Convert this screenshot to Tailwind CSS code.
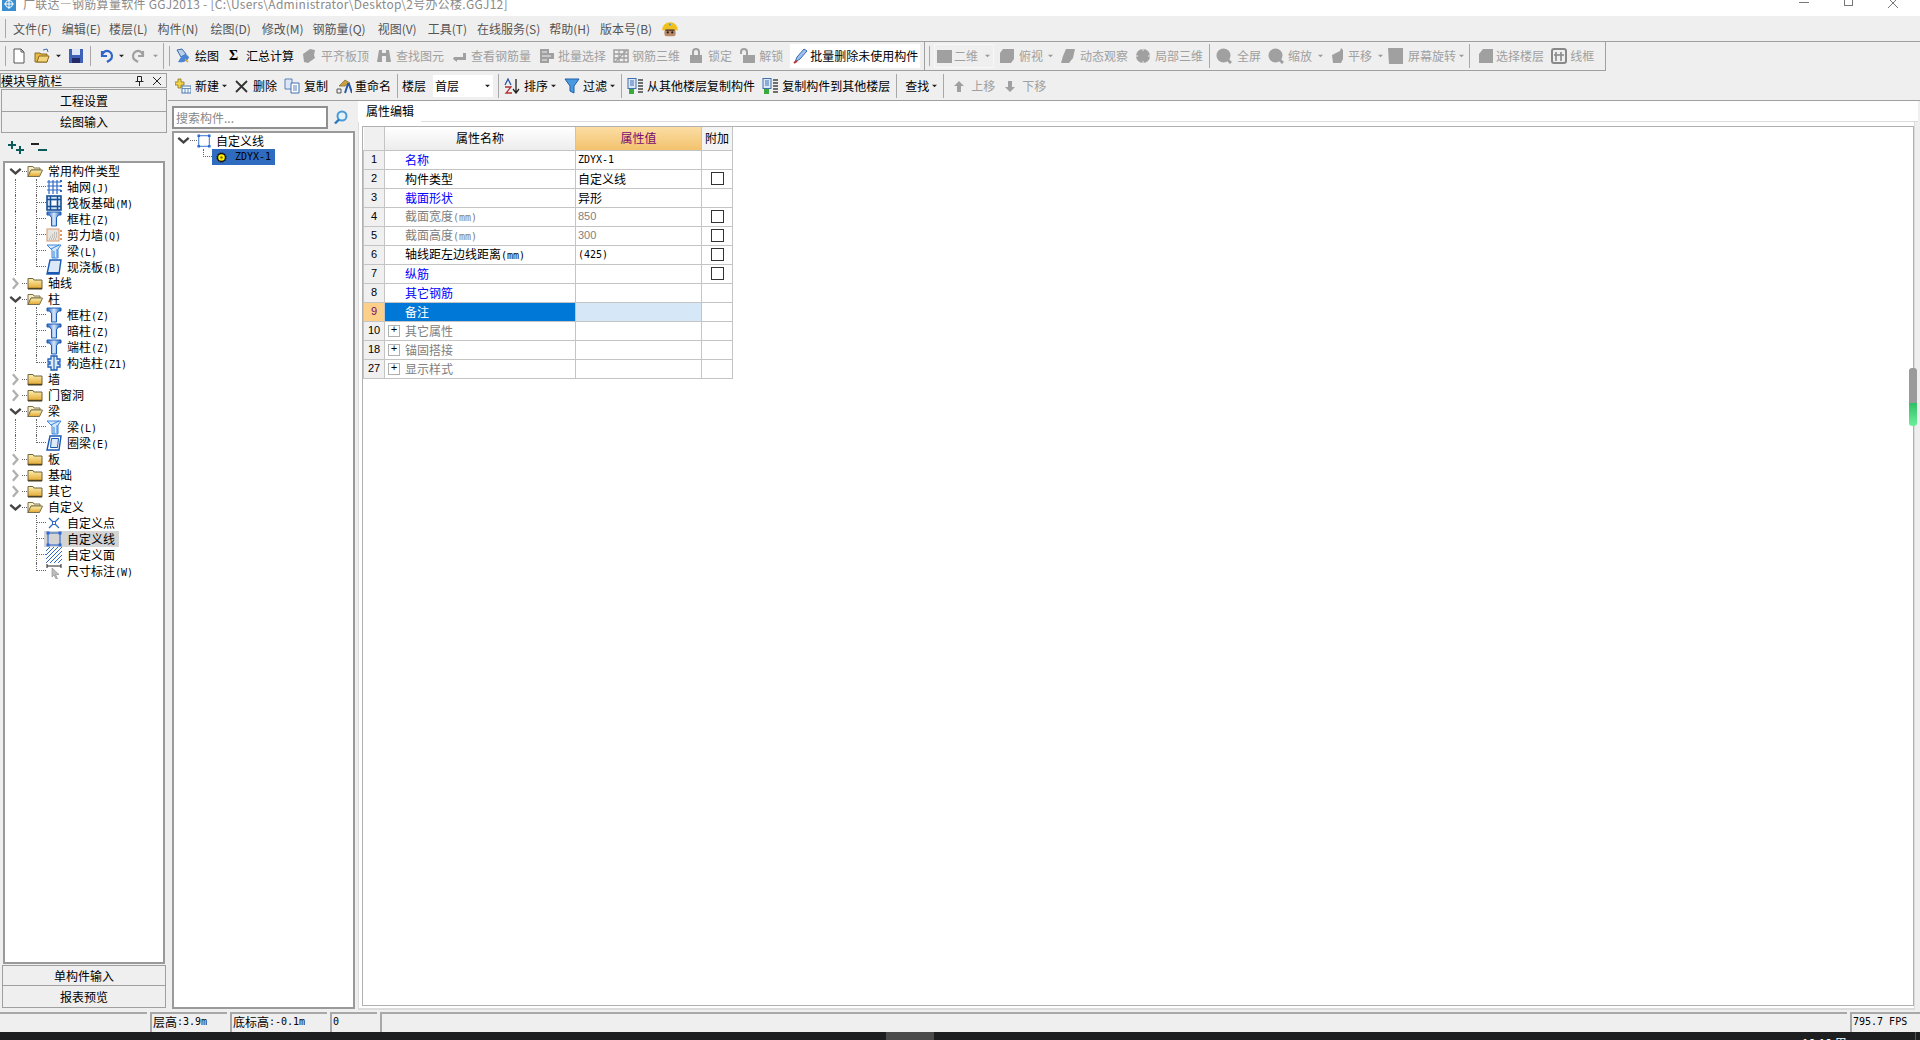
<!DOCTYPE html>
<html lang="zh-CN">
<head>
  <meta charset="UTF-8" />
  <title>广联达—钢筋算量软件 GGJ2013</title>
  <script src="https://cdn.jsdelivr.net/npm/@tailwindcss/browser@4"></script>
</head>
<body class="w-[1920px] h-[1040px] overflow-hidden flex flex-col bg-[#efefef] text-black text-[12px] leading-none font-['Noto_Sans_CJK_SC',sans-serif]">

  <!-- Icon sheet -->
  <svg class="absolute w-0 h-0">
    <defs>
      <linearGradient id="fold" x1="0" y1="0" x2="0" y2="1"><stop offset="0" stop-color="#fdf0b0"/><stop offset="1" stop-color="#e2a52c"/></linearGradient>
      <linearGradient id="colg" x1="0" y1="0" x2="1" y2="0"><stop offset="0" stop-color="#1f5fb8"/><stop offset="0.5" stop-color="#d8e8fb"/><stop offset="1" stop-color="#1f5fb8"/></linearGradient>
    </defs>
    <symbol id="folder" viewBox="0 0 16 16"><path d="M1 3.500h5l1 1.500h8v9H1z" fill="url(#fold)" stroke="#6e6440"/><path d="M1 13.500h14" stroke="#4c4326" stroke-width="1.400"/></symbol>
    <symbol id="folder-open" viewBox="0 0 16 16"><path d="M1 3.500h5l1 1.500h6v2H4l-3 7z" fill="#f8efc4" stroke="#7a6f48"/><path d="M4 7h11.500l-3 6.500H1z" fill="url(#fold)" stroke="#7a6f48"/></symbol>
    <symbol id="down" viewBox="0 0 10 10"><path d="M1 3l4 3.500L9 3" fill="none" stroke="#444" stroke-width="1.800"/></symbol>
    <symbol id="right" viewBox="0 0 10 10"><path d="M3 1l3.500 4L3 9" fill="none" stroke="#b0b0b0" stroke-width="1.800"/></symbol>
    <symbol id="grid" viewBox="0 0 16 16"><path d="M3 1v14M7 1v14M11 1v14M1 3h14M1 7h14M1 11h14" stroke="#2d69c4" stroke-width="1.200" fill="none"/><path d="M14 1h2v2h-2zM14 6h2v2h-2zM14 11h2v2h-2z" fill="#2d69c4"/></symbol>
    <symbol id="raft" viewBox="0 0 16 16"><rect x="1" y="1" width="14" height="14" fill="#cfe0f5" stroke="#164f94" stroke-width="1.600"/><path d="M1 4.500h14M1 11.500h14M4.500 1v14M11.500 1v14" stroke="#164f94" stroke-width="1.400"/><rect x="6" y="6" width="4" height="4" fill="#fff"/></symbol>
    <symbol id="column" viewBox="0 0 16 16"><path d="M1 1h14v3h-3v1l-1.500 1v9h-5V6L4 5V4H1z" fill="url(#colg)" stroke="#1f5fb8"/></symbol>
    <symbol id="wall" viewBox="0 0 16 16"><rect x="1" y="2" width="12" height="12" fill="#e8e4de" stroke="#d49a72"/><path d="M3 12h8M4 10h7M6 8h5M8 6h3" stroke="#9a9a9a" stroke-dasharray="1 1"/><path d="M14 4h2M14 8h2M14 12h2" stroke="#e07020" stroke-width="1.400"/></symbol>
    <symbol id="beam" viewBox="0 0 16 16"><path d="M1 2h14l-3 4v9H6V7z" fill="#d8e9fb" stroke="#3a86dc"/><path d="M5 6l8-4M8 8v7M11 6v8" stroke="#3a86dc"/></symbol>
    <symbol id="slab" viewBox="0 0 16 16"><path d="M4 1h11l-2 14H1z" fill="#dbe9f9" stroke="#1a58b4" stroke-width="1.400"/><path d="M2 14h11" stroke="#1a58b4" stroke-width="2"/></symbol>
    <symbol id="ring" viewBox="0 0 16 16"><path d="M4 1h11l-2 14H1z" fill="#fff" stroke="#1a58b4" stroke-width="1.400"/><path d="M5.500 3.500h7l-1 9h-7z" fill="#dbe9f9" stroke="#1a58b4"/></symbol>
    <symbol id="gz" viewBox="0 0 16 16"><path d="M5 1h6v3h3v3h-2v2h2v3h-3v3H5v-3H2V9h2V7H2V4h3z" fill="#dbe9f9" stroke="#1f5fb8" stroke-width="1.300"/><path d="M8 1v14" stroke="#1f5fb8"/></symbol>
    <symbol id="pt" viewBox="0 0 16 16"><path d="M3 3l10 10M13 3L3 13" stroke="#2d69c4" stroke-width="1.300"/><rect x="6.500" y="6.500" width="3" height="3" fill="#fff" stroke="#2d69c4"/></symbol>
    <symbol id="line" viewBox="0 0 16 16"><rect x="2" y="2" width="12" height="12" fill="none" stroke="#1f5fc8"/><path d="M0.500 0.500h3v3h-3zM12.500 0.500h3v3h-3zM0.500 12.500h3v3h-3zM12.500 12.500h3v3h-3z" fill="#2d69d4"/></symbol>
    <symbol id="face" viewBox="0 0 16 16"><path d="M0 4l4-4M0 8l8-8M0 12L12 0M0 16L16 0M4 16L16 4M8 16l8-8M12 16l4-4" stroke="#2d69c4"/></symbol>
    <symbol id="dim" viewBox="0 0 16 16"><path d="M1 1v4M15 1v4M1 3h14" stroke="#222"/><path d="M6 5l7 6.500H9.500l2 4-1.500.500-2-4L6 14z" fill="#bdbdbd" stroke="#888" stroke-width="0.600"/></symbol>
    <symbol id="gear" viewBox="0 0 12 12"><circle cx="6" cy="6" r="4.800" fill="#111" stroke="#111" stroke-width="1.400" stroke-dasharray="1.500 1"/><circle cx="6" cy="6" r="3.600" fill="#fff000"/><circle cx="6" cy="6" r="1.300" fill="#7a6a00"/></symbol>
    <symbol id="g-page" viewBox="0 0 16 16"><path d="M2 6l7-5 5 1-1 5 1 3-7 5-4-1z" fill="#a0a0a0"/></symbol>
    <symbol id="g-binoc" viewBox="0 0 16 16"><path d="M3 2h3v3h4V2h3l2 12h-5V8H6v6H1z" fill="#a0a0a0"/></symbol>
    <symbol id="g-back" viewBox="0 0 16 16"><path d="M2 9h9V5h3v7H5v2L1 11l1-2z" fill="#a0a0a0"/></symbol>
    <symbol id="g-select" viewBox="0 0 16 16"><path d="M1 1h9v4h5v6h-5v4H1z" fill="#a0a0a0"/><path d="M3 4h5M3 8h9M3 12h5" stroke="#efefef"/></symbol>
    <symbol id="g-3d" viewBox="0 0 16 16"><path d="M1 2h14v12H1z" fill="none" stroke="#a0a0a0" stroke-width="1.500"/><path d="M1 6h14M1 10h14M6 2v12M11 2v12M2 14L14 2" stroke="#a0a0a0" stroke-width="1.300"/></symbol>
    <symbol id="g-lock" viewBox="0 0 16 16"><path d="M2 7h12v8H2z" fill="#a0a0a0"/><path d="M5 7V4a3 3 0 016 0v3" fill="none" stroke="#a0a0a0" stroke-width="2"/></symbol>
    <symbol id="g-unlock" viewBox="0 0 16 16"><path d="M3 7h12v8H3z" fill="#a0a0a0"/><path d="M1 6V4a3 3 0 016 0v3" fill="none" stroke="#a0a0a0" stroke-width="2"/></symbol>
    <symbol id="g-top" viewBox="0 0 16 16"><path d="M4 1h11v10l-3 4H1V5z" fill="#a0a0a0"/></symbol>
    <symbol id="g-orbit" viewBox="0 0 16 16"><path d="M6 1h9l-2 9-4 5H1l2-7z" fill="#a0a0a0"/></symbol>
    <symbol id="g-local" viewBox="0 0 16 16"><circle cx="8" cy="8" r="7" fill="#a0a0a0"/><path d="M8 0v3M8 13v3M0 8h3M13 8h3" stroke="#efefef"/></symbol>
    <symbol id="g-full" viewBox="0 0 16 16"><circle cx="7.500" cy="7.500" r="7" fill="#a0a0a0"/><path d="M11 11l4 4" stroke="#a0a0a0" stroke-width="3"/></symbol>
    <symbol id="g-pan" viewBox="0 0 16 16"><path d="M3 7l8-4 1-3 2 2v9l-2 4H4z" fill="#a0a0a0"/></symbol>
    <symbol id="g-rot" viewBox="0 0 16 16"><path d="M0 0h15v16H1z" fill="#a0a0a0"/></symbol>
    <symbol id="g-floor" viewBox="0 0 16 16"><path d="M5 1h10v14H1V6z" fill="#a0a0a0"/></symbol>
    <symbol id="g-wire" viewBox="0 0 16 16"><rect x="1" y="1" width="14" height="14" rx="2" fill="none" stroke="#888" stroke-width="2"/><path d="M5 4v9M10 4v9M3 7h10" stroke="#888" stroke-width="1.600"/></symbol>
    <symbol id="caret" viewBox="0 0 6 4"><path d="M0 0.500h6L3 3.500z" fill="#222"/></symbol>
    <symbol id="caret-g" viewBox="0 0 6 4"><path d="M0 0.500h6L3 3.500z" fill="#999"/></symbol>
    <symbol id="add-doc" viewBox="0 0 16 16"><path d="M3 1h3v3h3v3H6v3H3V7H0V4h3z" fill="#f4d44a" stroke="#8a7420" stroke-width="0.800"/><rect x="7" y="8" width="9" height="7" fill="#f4f8fd" stroke="#4a7ab0"/><path d="M7 10.500h9M10 10.500V15M13 10.500V15" stroke="#4a7ab0" stroke-width="0.800"/></symbol>
    <symbol id="copy" viewBox="0 0 16 16"><path d="M1 1h7v10H1z" fill="#dbe7f6" stroke="#5a82b8"/><path d="M7 5h8v10H7z" fill="#fff" stroke="#3f6fb0"/><path d="M9 8h4M9 10h4M9 12h4" stroke="#5a82b8"/></symbol>
    <symbol id="rename" viewBox="0 0 16 16"><path d="M3 8l6-6 5 3-5 3z" fill="#c8a040" stroke="#8a7030" stroke-width="0.800"/><path d="M9 15l3-9h1l3 9" fill="none" stroke="#2858a8" stroke-width="2"/><path d="M1 11h4v4H1z" fill="none" stroke="#555"/></symbol>
    <symbol id="sort" viewBox="0 0 16 16"><path d="M12 1v13M9 11l3 4 3-4" fill="none" stroke="#222" stroke-width="1.300"/><path d="M1 7l3-6 3 6" fill="none" stroke="#2858a8" stroke-width="1.300"/><path d="M1 9h6l-5 6h6" fill="none" stroke="#b03030" stroke-width="1.300"/></symbol>
    <symbol id="filter" viewBox="0 0 16 16"><path d="M1 1h14l-5 7v7l-4-2V8z" fill="#4a9ae0" stroke="#1f5fa8"/></symbol>
    <symbol id="floor-from" viewBox="0 0 16 16"><rect x="1" y="0.500" width="8" height="10" fill="#dbe7f6" stroke="#3f6fb0"/><path d="M3 3h4M3 5h4M3 7h4" stroke="#3f6fb0"/><path d="M2 11h5v5H2z" fill="#3aa83a"/><path d="M11 2h5M11 5h5M11 8h5M11 11h5M11 14h5" stroke="#444" stroke-width="1.300"/></symbol>
  </svg>

  <!-- Title bar -->
  <header class="h-4 shrink-0 bg-white relative overflow-hidden flex text-[#8a8a8a]">
    <svg class="ml-[2px] -mt-[3px] w-[14px] h-[14px]" viewBox="0 0 14 14"><rect width="14" height="14" fill="#3b8fd0"/><path d="M7 2v10M2 7h10" stroke="#fff"/><circle cx="7" cy="7" r="3.500" fill="none" stroke="#fff"/></svg>
    <span class="ml-[7px] -mt-[2px] tracking-[0.27px] whitespace-nowrap">广联达—钢筋算量软件 GGJ2013 - [C:\Users\Administrator\Desktop\2号办公楼.GGJ12]</span>
    <span class="absolute left-[1799px] top-[2px] w-[10px] h-px bg-[#777]"></span>
    <span class="absolute left-[1844px] -top-[3px] w-[9px] h-[9px] border border-[#777]"></span>
    <svg class="absolute left-[1888px] -top-[2px] w-[10px] h-[10px]" viewBox="0 0 10 10"><path d="M0 0l10 10M10 0L0 10" stroke="#777"/></svg>
  </header>

  <!-- Menu bar -->
  <nav class="h-[26px] shrink-0 border-b border-[#a0a0a0] flex items-center text-[#555]">
    <span class="ml-[5px] w-px h-[19px] bg-[#a8a8a8]"></span>
    <span class="ml-[7px]">文件(F)</span>
    <span class="ml-[10px]">编辑(E)</span>
    <span class="ml-[8px]">楼层(L)</span>
    <span class="ml-[10px]">构件(N)</span>
    <span class="ml-[12px]">绘图(D)</span>
    <span class="ml-[11px]">修改(M)</span>
    <span class="ml-[9px]">钢筋量(Q)</span>
    <span class="ml-[12px]">视图(V)</span>
    <span class="ml-[11px]">工具(T)</span>
    <span class="ml-[10px]">在线服务(S)</span>
    <span class="ml-[9px]">帮助(H)</span>
    <span class="ml-[10px]">版本号(B)</span>
    <svg class="ml-[9px] w-[18px] h-[18px]" viewBox="0 0 16 16"><path d="M1 9a7 7 0 0114 0z" fill="#f0c020"/><rect x="3" y="8.500" width="10" height="6" rx="2" fill="#b98a68"/><path d="M4 9h8" stroke="#3a2a20"/><circle cx="6" cy="11" r="1" fill="#222"/><circle cx="10" cy="11" r="1" fill="#222"/><circle cx="8" cy="4" r="1" fill="#4aa0e0"/></svg>
  </nav>

  <!-- Toolbar 1 -->
  <div class="h-[29px] shrink-0 flex">
    <div class="w-[925px] border-r border-b border-[#a0a0a0] flex items-center text-[#a0a0a0]">
      <span class="ml-[5px] w-px h-5 bg-[#a8a8a8]"></span>
      <svg class="ml-[5px] w-4 h-4" viewBox="0 0 16 16"><path d="M3 1h7l3 3v11H3z" fill="#fff" stroke="#555"/><path d="M10 1v3h3" fill="none" stroke="#555"/></svg>
      <svg class="ml-[7px] w-4 h-4" viewBox="0 0 16 16"><path d="M1 5h5l1 1h6v8H1z" fill="#e8b84a" stroke="#8a6a20"/><path d="M3 14l2-6h10l-2 6z" fill="#f4d67c" stroke="#8a6a20"/><path d="M9 2l4-1 1 3" fill="none" stroke="#3a6ab0"/></svg>
      <svg class="ml-[6px] w-[5px] h-[4px]"><use href="#caret"/></svg>
      <svg class="ml-[7px] w-4 h-4" viewBox="0 0 16 16"><rect x="1" y="1" width="14" height="14" fill="#3f62b8"/><rect x="4" y="1" width="8" height="6" fill="#dfe6f5"/><rect x="4" y="10" width="8" height="5" fill="#232a66"/></svg>
      <span class="ml-[6px] w-px h-5 bg-[#a8a8a8]"></span>
      <svg class="ml-[7px] w-4 h-4" viewBox="0 0 16 16"><path d="M4 3v5h5M4 8a5 5 0 118 4l-3 2" fill="none" stroke="#2f66c8" stroke-width="2.200"/></svg>
      <svg class="ml-[5px] w-[5px] h-[4px]"><use href="#caret"/></svg>
      <svg class="ml-[7px] w-4 h-4" viewBox="0 0 16 16"><path d="M12 3v5H7M12 8a5 5 0 10-8 4l3 2" fill="none" stroke="#a0a0a0" stroke-width="2.200"/></svg>
      <svg class="ml-[6px] w-[5px] h-[4px]"><use href="#caret-g"/></svg>
      <span class="ml-[5px] w-px h-[26px] bg-[#a8a8a8]"></span>
      <span class="ml-[5px] w-px h-5 bg-[#a8a8a8]"></span>
      <svg class="ml-[5px] w-4 h-4" viewBox="0 0 16 16"><path d="M2 2l5-1 4 5-5 3z" fill="#b8cfe8" stroke="#3a6ab0"/><path d="M3 14l3-5 5-3 3 3c-1 4-6 6-11 5z" fill="#4a86d8"/><path d="M10 11l3 3" stroke="#d0a030" stroke-width="1.500"/></svg>
      <span class="ml-1 text-black">绘图</span>
      <span class="ml-[10px] w-[9px] text-black font-bold text-[14px] font-['Liberation_Serif',serif]">Σ</span>
      <span class="ml-[8px] text-black">汇总计算</span>
      <svg class="ml-[7px] w-4 h-4"><use href="#g-page"/></svg><span class="ml-1">平齐板顶</span>
      <svg class="ml-[7px] w-4 h-4"><use href="#g-binoc"/></svg><span class="ml-1">查找图元</span>
      <svg class="ml-[8px] w-4 h-4"><use href="#g-back"/></svg><span class="ml-[3px]">查看钢筋量</span>
      <svg class="ml-[8px] w-4 h-4"><use href="#g-select"/></svg><span class="ml-[3px]">批量选择</span>
      <svg class="ml-[7px] w-4 h-4"><use href="#g-3d"/></svg><span class="ml-[3px]">钢筋三维</span>
      <svg class="ml-[8px] w-4 h-4"><use href="#g-lock"/></svg><span class="ml-1">锁定</span>
      <svg class="ml-[8px] w-4 h-4"><use href="#g-unlock"/></svg><span class="ml-[3px]">解锁</span>
      <span class="ml-[7px] h-6 w-[130px] bg-white flex items-center text-black">
        <svg class="ml-[3px] w-4 h-4" viewBox="0 0 16 16"><path d="M2 14l2-5 7-8 3 2-7 8z" fill="#9cc0ec" stroke="#3a6ab0"/><path d="M1 15l3-2" stroke="#c03030" stroke-width="2"/></svg>
        <span class="ml-px">批量删除未使用构件</span>
      </span>
    </div>
    <div class="w-[681px] border-r border-b border-[#a0a0a0] flex items-center text-[#a0a0a0]">
      <span class="ml-[4px] w-px h-5 bg-[#a8a8a8]"></span>
      <span class="ml-[4px] w-[60px] h-[24px] border border-[#f8f8f8] flex items-center">
        <svg class="ml-[2px] w-4 h-[14px]" viewBox="0 0 16 14"><rect width="15" height="13" y="1" fill="#a0a0a0"/></svg>
        <span class="ml-[1px]">二维</span>
        <svg class="ml-[7px] w-[5px] h-[4px]"><use href="#caret-g"/></svg>
      </span>
      <svg class="ml-[5px] w-4 h-4"><use href="#g-top"/></svg><span class="ml-1">俯视</span>
      <svg class="ml-[5px] w-[5px] h-[4px]"><use href="#caret-g"/></svg>
      <svg class="ml-[7px] w-4 h-4"><use href="#g-orbit"/></svg><span class="ml-1">动态观察</span>
      <svg class="ml-[7px] w-4 h-4"><use href="#g-local"/></svg><span class="ml-1">局部三维</span>
      <span class="ml-[6px] w-px h-[24px] bg-[#a8a8a8]"></span>
      <svg class="ml-[6px] w-4 h-4"><use href="#g-full"/></svg><span class="ml-[5px]">全屏</span>
      <svg class="ml-[7px] w-4 h-4"><use href="#g-full"/></svg><span class="ml-1">缩放</span>
      <svg class="ml-[6px] w-[5px] h-[4px]"><use href="#caret-g"/></svg>
      <svg class="ml-[6px] w-4 h-4"><use href="#g-pan"/></svg><span class="ml-[3px]">平移</span>
      <svg class="ml-[6px] w-[5px] h-[4px]"><use href="#caret-g"/></svg>
      <svg class="ml-[5px] w-4 h-4"><use href="#g-rot"/></svg><span class="ml-1">屏幕旋转</span>
      <svg class="ml-[3px] w-[5px] h-[4px]"><use href="#caret-g"/></svg>
      <span class="ml-[5px] w-px h-[24px] bg-[#a8a8a8]"></span>
      <svg class="ml-[8px] w-4 h-4"><use href="#g-floor"/></svg><span class="ml-[2px]">选择楼层</span>
      <svg class="ml-[7px] w-4 h-4"><use href="#g-wire"/></svg><span class="ml-[3px]">线框</span>
    </div>
  </div>

  <!-- Workspace -->
  <div class="h-[941px] shrink-0 flex">

    <!-- Module navigation -->
    <aside class="w-[168px] shrink-0 pt-[2px] flex flex-col">
      <div class="h-[15px] mr-px border border-[#a0a0a0] flex items-center">
        <span class="tracking-[0.3px]">模块导航栏</span>
        <svg class="ml-[72px] w-[9px] h-[10px]" viewBox="0 0 9 10"><path d="M2.500 0.500h4v5h-4zM0.500 5.500h8M4.500 5.500V10" fill="none" stroke="#222"/></svg>
        <svg class="ml-[9px] w-2 h-2" viewBox="0 0 8 8"><path d="M0 0l8 8M8 0L0 8" stroke="#222"/></svg>
      </div>
      <div class="mt-px ml-px mr-px h-[23px] border border-[#a0a0a0] flex items-center justify-center">工程设置</div>
      <div class="ml-px mr-px h-[21px] border-x border-b border-[#a0a0a0] flex items-center justify-center">绘图输入</div>
      <div class="h-[28px] ml-[2px] mr-[2px] flex items-center">
        <svg class="ml-[6px] w-[17px] h-[14px]" viewBox="0 0 17 14"><path d="M4 1v8M0 5h8M12 6v8M8 10h8" stroke="#0c5a5a" stroke-width="2"/></svg>
        <svg class="ml-[6px] w-[17px] h-[14px]" viewBox="0 0 17 14"><path d="M0 4h8" stroke="#222" stroke-width="2"/><path d="M7 10h9" stroke="#0c5a5a" stroke-width="2"/></svg>
      </div>
      <div class="ml-[3px] w-[162px] h-[803px] border-2 border-[#9a9a9a] bg-white overflow-hidden">
        <!-- 常用构件类型 -->
        <div class="flex h-4 items-center"><svg class="ml-[4px] w-[13px] h-[13px]"><use href="#down"/></svg><span class="w-[5px] border-t border-dotted border-[#666]"></span><svg class="w-4 h-4"><use href="#folder-open"/></svg><span class="ml-[5px]">常用构件类型</span></div>
        <div class="flex h-4 items-center"><span class="w-[11px] h-full border-r border-dotted border-[#666]"></span><span class="ml-[20px] w-[10px] h-full flex flex-col border-l border-dotted border-[#666]"><span class="h-1/2 border-b border-dotted border-[#666]"></span></span><svg class="w-4 h-4"><use href="#grid"/></svg><span class="ml-[5px]">轴网<span class="font-['DejaVu_Sans_Mono'] text-[10px]">(J)</span></span></div>
        <div class="flex h-4 items-center"><span class="w-[11px] h-full border-r border-dotted border-[#666]"></span><span class="ml-[20px] w-[10px] h-full flex flex-col border-l border-dotted border-[#666]"><span class="h-1/2 border-b border-dotted border-[#666]"></span></span><svg class="w-4 h-4"><use href="#raft"/></svg><span class="ml-[5px]">筏板基础<span class="font-['DejaVu_Sans_Mono'] text-[10px]">(M)</span></span></div>
        <div class="flex h-4 items-center"><span class="w-[11px] h-full border-r border-dotted border-[#666]"></span><span class="ml-[20px] w-[10px] h-full flex flex-col border-l border-dotted border-[#666]"><span class="h-1/2 border-b border-dotted border-[#666]"></span></span><svg class="w-4 h-4"><use href="#column"/></svg><span class="ml-[5px]">框柱<span class="font-['DejaVu_Sans_Mono'] text-[10px]">(Z)</span></span></div>
        <div class="flex h-4 items-center"><span class="w-[11px] h-full border-r border-dotted border-[#666]"></span><span class="ml-[20px] w-[10px] h-full flex flex-col border-l border-dotted border-[#666]"><span class="h-1/2 border-b border-dotted border-[#666]"></span></span><svg class="w-4 h-4"><use href="#wall"/></svg><span class="ml-[5px]">剪力墙<span class="font-['DejaVu_Sans_Mono'] text-[10px]">(Q)</span></span></div>
        <div class="flex h-4 items-center"><span class="w-[11px] h-full border-r border-dotted border-[#666]"></span><span class="ml-[20px] w-[10px] h-full flex flex-col border-l border-dotted border-[#666]"><span class="h-1/2 border-b border-dotted border-[#666]"></span></span><svg class="w-4 h-4"><use href="#beam"/></svg><span class="ml-[5px]">梁<span class="font-['DejaVu_Sans_Mono'] text-[10px]">(L)</span></span></div>
        <div class="flex h-4 items-center"><span class="w-[11px] h-full border-r border-dotted border-[#666]"></span><span class="ml-[20px] w-[10px] h-1/2 self-start border-l border-b border-dotted border-[#666]"></span><svg class="w-4 h-4"><use href="#slab"/></svg><span class="ml-[5px]">现浇板<span class="font-['DejaVu_Sans_Mono'] text-[10px]">(B)</span></span></div>
        <!-- 轴线 -->
        <div class="flex h-4 items-center"><svg class="ml-[4px] w-[13px] h-[13px]"><use href="#right"/></svg><span class="w-[5px] border-t border-dotted border-[#666]"></span><svg class="w-4 h-4"><use href="#folder"/></svg><span class="ml-[5px]">轴线</span></div>
        <!-- 柱 -->
        <div class="flex h-4 items-center"><svg class="ml-[4px] w-[13px] h-[13px]"><use href="#down"/></svg><span class="w-[5px] border-t border-dotted border-[#666]"></span><svg class="w-4 h-4"><use href="#folder-open"/></svg><span class="ml-[5px]">柱</span></div>
        <div class="flex h-4 items-center"><span class="w-[11px] h-full border-r border-dotted border-[#666]"></span><span class="ml-[20px] w-[10px] h-full flex flex-col border-l border-dotted border-[#666]"><span class="h-1/2 border-b border-dotted border-[#666]"></span></span><svg class="w-4 h-4"><use href="#column"/></svg><span class="ml-[5px]">框柱<span class="font-['DejaVu_Sans_Mono'] text-[10px]">(Z)</span></span></div>
        <div class="flex h-4 items-center"><span class="w-[11px] h-full border-r border-dotted border-[#666]"></span><span class="ml-[20px] w-[10px] h-full flex flex-col border-l border-dotted border-[#666]"><span class="h-1/2 border-b border-dotted border-[#666]"></span></span><svg class="w-4 h-4"><use href="#column"/></svg><span class="ml-[5px]">暗柱<span class="font-['DejaVu_Sans_Mono'] text-[10px]">(Z)</span></span></div>
        <div class="flex h-4 items-center"><span class="w-[11px] h-full border-r border-dotted border-[#666]"></span><span class="ml-[20px] w-[10px] h-full flex flex-col border-l border-dotted border-[#666]"><span class="h-1/2 border-b border-dotted border-[#666]"></span></span><svg class="w-4 h-4"><use href="#column"/></svg><span class="ml-[5px]">端柱<span class="font-['DejaVu_Sans_Mono'] text-[10px]">(Z)</span></span></div>
        <div class="flex h-4 items-center"><span class="w-[11px] h-full border-r border-dotted border-[#666]"></span><span class="ml-[20px] w-[10px] h-1/2 self-start border-l border-b border-dotted border-[#666]"></span><svg class="w-4 h-4"><use href="#gz"/></svg><span class="ml-[5px]">构造柱<span class="font-['DejaVu_Sans_Mono'] text-[10px]">(Z1)</span></span></div>
        <!-- 墙, 门窗洞 -->
        <div class="flex h-4 items-center"><svg class="ml-[4px] w-[13px] h-[13px]"><use href="#right"/></svg><span class="w-[5px] border-t border-dotted border-[#666]"></span><svg class="w-4 h-4"><use href="#folder"/></svg><span class="ml-[5px]">墙</span></div>
        <div class="flex h-4 items-center"><svg class="ml-[4px] w-[13px] h-[13px]"><use href="#right"/></svg><span class="w-[5px] border-t border-dotted border-[#666]"></span><svg class="w-4 h-4"><use href="#folder"/></svg><span class="ml-[5px]">门窗洞</span></div>
        <!-- 梁 -->
        <div class="flex h-4 items-center"><svg class="ml-[4px] w-[13px] h-[13px]"><use href="#down"/></svg><span class="w-[5px] border-t border-dotted border-[#666]"></span><svg class="w-4 h-4"><use href="#folder-open"/></svg><span class="ml-[5px]">梁</span></div>
        <div class="flex h-4 items-center"><span class="w-[11px] h-full border-r border-dotted border-[#666]"></span><span class="ml-[20px] w-[10px] h-full flex flex-col border-l border-dotted border-[#666]"><span class="h-1/2 border-b border-dotted border-[#666]"></span></span><svg class="w-4 h-4"><use href="#beam"/></svg><span class="ml-[5px]">梁<span class="font-['DejaVu_Sans_Mono'] text-[10px]">(L)</span></span></div>
        <div class="flex h-4 items-center"><span class="w-[11px] h-full border-r border-dotted border-[#666]"></span><span class="ml-[20px] w-[10px] h-1/2 self-start border-l border-b border-dotted border-[#666]"></span><svg class="w-4 h-4"><use href="#ring"/></svg><span class="ml-[5px]">圈梁<span class="font-['DejaVu_Sans_Mono'] text-[10px]">(E)</span></span></div>
        <!-- 板, 基础, 其它 -->
        <div class="flex h-4 items-center"><svg class="ml-[4px] w-[13px] h-[13px]"><use href="#right"/></svg><span class="w-[5px] border-t border-dotted border-[#666]"></span><svg class="w-4 h-4"><use href="#folder"/></svg><span class="ml-[5px]">板</span></div>
        <div class="flex h-4 items-center"><svg class="ml-[4px] w-[13px] h-[13px]"><use href="#right"/></svg><span class="w-[5px] border-t border-dotted border-[#666]"></span><svg class="w-4 h-4"><use href="#folder"/></svg><span class="ml-[5px]">基础</span></div>
        <div class="flex h-4 items-center"><svg class="ml-[4px] w-[13px] h-[13px]"><use href="#right"/></svg><span class="w-[5px] border-t border-dotted border-[#666]"></span><svg class="w-4 h-4"><use href="#folder"/></svg><span class="ml-[5px]">其它</span></div>
        <!-- 自定义 -->
        <div class="flex h-4 items-center"><svg class="ml-[4px] w-[13px] h-[13px]"><use href="#down"/></svg><span class="w-[5px] border-t border-dotted border-[#666]"></span><svg class="w-4 h-4"><use href="#folder-open"/></svg><span class="ml-[5px]">自定义</span></div>
        <div class="flex h-4 items-center"><span class="ml-[31px] w-[10px] h-full flex flex-col border-l border-dotted border-[#666]"><span class="h-1/2 border-b border-dotted border-[#666]"></span></span><svg class="w-4 h-4"><use href="#pt"/></svg><span class="ml-[5px]">自定义点</span></div>
        <div class="flex h-4 items-center"><span class="ml-[31px] w-[8px] h-full flex flex-col border-l border-dotted border-[#666]"><span class="h-1/2 border-b border-dotted border-[#666]"></span></span><span class="flex items-center h-4 bg-[#d4d4d4] pl-[2px] pr-[4px]"><svg class="w-4 h-4"><use href="#line"/></svg><span class="ml-[5px]">自定义线</span></span></div>
        <div class="flex h-4 items-center"><span class="ml-[31px] w-[10px] h-full flex flex-col border-l border-dotted border-[#666]"><span class="h-1/2 border-b border-dotted border-[#666]"></span></span><svg class="w-4 h-4"><use href="#face"/></svg><span class="ml-[5px]">自定义面</span></div>
        <div class="flex h-4 items-center"><span class="ml-[31px] w-[10px] h-1/2 self-start border-l border-b border-dotted border-[#666]"></span><svg class="w-4 h-4"><use href="#dim"/></svg><span class="ml-[5px]">尺寸标注<span class="font-['DejaVu_Sans_Mono'] text-[10px]">(W)</span></span></div>
      </div>
      <div class="mt-px ml-[2px] mr-[2px] h-[21px] border border-[#a0a0a0] flex items-center justify-center">单构件输入</div>
      <div class="ml-[2px] mr-[2px] h-[22px] border-x border-b border-[#a0a0a0] flex items-center justify-center">报表预览</div>
    </aside>

    <div class="flex-1 flex flex-col">
      <!-- Toolbar 2 -->
      <div class="mt-px h-[29px] shrink-0 border-b border-[#a0a0a0] flex items-center">
        <svg class="ml-[7px] w-4 h-4"><use href="#add-doc"/></svg><span class="ml-[4px]">新建</span>
        <svg class="ml-[3px] w-[5px] h-[4px]"><use href="#caret"/></svg>
        <svg class="ml-[8px] w-[13px] h-[13px]" viewBox="0 0 13 13"><path d="M1 1l11 11M12 1L1 12" stroke="#333" stroke-width="1.800"/></svg>
        <span class="ml-[5px]">删除</span>
        <svg class="ml-[7px] w-4 h-4"><use href="#copy"/></svg><span class="ml-[4px]">复制</span>
        <svg class="ml-[8px] w-4 h-4"><use href="#rename"/></svg><span class="ml-[3px]">重命名</span>
        <span class="ml-[6px] w-px h-6 bg-[#a8a8a8]"></span>
        <span class="ml-[4px]">楼层</span>
        <span class="ml-[7px] w-[60px] h-[22px] bg-white flex items-center justify-between pl-[2px] pr-[3px]">首层<svg class="w-[5px] h-[4px]"><use href="#caret"/></svg></span>
        <span class="ml-[5px] w-px h-6 bg-[#a8a8a8]"></span>
        <svg class="ml-[5px] w-4 h-4"><use href="#sort"/></svg><span class="ml-[4px]">排序</span>
        <svg class="ml-[3px] w-[5px] h-[4px]"><use href="#caret"/></svg>
        <svg class="ml-[8px] w-4 h-4"><use href="#filter"/></svg><span class="ml-[3px]">过滤</span>
        <svg class="ml-[3px] w-[5px] h-[4px]"><use href="#caret"/></svg>
        <span class="ml-[6px] w-px h-6 bg-[#a8a8a8]"></span>
        <svg class="ml-[5px] w-4 h-4"><use href="#floor-from"/></svg><span class="ml-[4px]">从其他楼层复制构件</span>
        <svg class="ml-[7px] w-4 h-4"><use href="#floor-from"/></svg><span class="ml-[4px]">复制构件到其他楼层</span>
        <span class="ml-[6px] w-px h-6 bg-[#a8a8a8]"></span>
        <span class="ml-[8px]">查找</span>
        <svg class="ml-[3px] w-[5px] h-[4px]"><use href="#caret"/></svg>
        <span class="ml-[6px] w-px h-6 bg-[#a8a8a8]"></span>
        <svg class="ml-[10px] w-[10px] h-[11px]" viewBox="0 0 10 11"><path d="M5 0l5 5H7v6H3V5H0z" fill="#a0a0a0"/></svg>
        <span class="ml-[7px] text-[#a0a0a0]">上移</span>
        <svg class="ml-[10px] w-[10px] h-[11px]" viewBox="0 0 10 11"><path d="M5 11l5-5H7V0H3v6H0z" fill="#a0a0a0"/></svg>
        <span class="ml-[7px] text-[#a0a0a0]">下移</span>
      </div>

      <div class="flex-1 flex">
        <!-- Component list -->
        <section class="ml-[3px] w-[184px] shrink-0 flex flex-col">
          <div class="mt-[5px] h-[23px] flex items-center">
            <div class="ml-px w-[156px] h-full bg-white border-2 border-[#909090] flex items-center pl-[2px] text-[#888]">搜索构件...</div>
            <svg class="ml-[5px] w-[15px] h-[15px]" viewBox="0 0 15 15"><circle cx="9" cy="6" r="4.500" fill="#e4f1fb" stroke="#4a9ad8" stroke-width="2"/><path d="M6 9.500l-4 4" stroke="#2a78c0" stroke-width="2.400"/></svg>
          </div>
          <div class="mt-[2px] ml-px h-[878px] border-2 border-[#9a9a9a] bg-white overflow-hidden">
            <div class="flex items-center h-[15px]">
              <svg class="ml-[3px] w-[13px] h-[13px]"><use href="#down"/></svg>
              <span class="w-[7px] border-t border-dotted border-[#666]"></span>
              <svg class="w-[14px] h-[14px]"><use href="#line"/></svg>
              <span class="ml-[5px]">自定义线</span>
            </div>
            <div class="flex items-center h-4 mt-px">
              <span class="ml-[29px] w-[9px] h-1/2 self-start border-l border-b border-dotted border-[#666]"></span>
              <span class="w-[63px] h-4 bg-[#2f6cc0] flex items-center">
                <svg class="ml-1 w-[11px] h-[11px]"><use href="#gear"/></svg>
                <span class="ml-2 font-['DejaVu_Sans_Mono'] text-[10px]">ZDYX-1</span>
              </span>
            </div>
          </div>
        </section>

        <!-- Property editor -->
        <section class="ml-[3px] w-[1560px] flex flex-col">
          <div class="h-[21px] bg-white flex">
            <div class="ml-[2px] w-[61px] h-full bg-white flex items-center pl-[6px] pb-[2px]">属性编辑</div>
            <div class="flex-1 border-b border-[#dcdcdc]"></div>
          </div>
          <div class="h-[888px] mr-[3px] bg-white border-b-2 border-r border-l border-[#dcdcdc] pt-[4px] pl-[3px]">
            <div class="h-[880px] border border-[#b0b0b0]">
              <table class="table-fixed border-collapse w-[368px]">
                <colgroup><col class="w-[21px]"><col class="w-[191px]"><col class="w-[126px]"><col class="w-[31px]"></colgroup>
                <tr class="h-[23px]">
                  <th class="font-normal border-b border-r border-[#c4c4c4] bg-[#f0f0f0]"></th>
                  <th class="font-normal border-b border-r border-[#c4c4c4] bg-gradient-to-b from-white to-[#ececec]">属性名称</th>
                  <th class="font-normal border-b border-r border-[#c4c4c4] bg-gradient-to-b from-[#fbdda3] to-[#f2c26c] text-[#7a0a6e]">属性值</th>
                  <th class="font-normal border-b border-r border-[#c4c4c4] bg-[#f4f4f4]">附加</th>
                </tr>
                <tr class="h-[19px]">
                  <td class="border border-[#c4c4c4] bg-[#f0f0f0] text-center font-['Liberation_Sans'] text-[11px]">1</td>
                  <td class="border border-[#c4c4c4] pl-[20px] text-[#0000ff]">名称</td>
                  <td class="border border-[#c4c4c4] pl-[2px] font-['DejaVu_Sans_Mono'] text-[10px]">ZDYX-1</td>
                  <td class="border border-[#c4c4c4]"></td>
                </tr>
                <tr class="h-[19px]">
                  <td class="border border-[#c4c4c4] bg-[#f0f0f0] text-center font-['Liberation_Sans'] text-[11px]">2</td>
                  <td class="border border-[#c4c4c4] pl-[20px]">构件类型</td>
                  <td class="border border-[#c4c4c4] pl-[2px]">自定义线</td>
                  <td class="border border-[#c4c4c4]"><div class="mx-auto w-[13px] h-[13px] border border-[#333]"></div></td>
                </tr>
                <tr class="h-[19px]">
                  <td class="border border-[#c4c4c4] bg-[#f0f0f0] text-center font-['Liberation_Sans'] text-[11px]">3</td>
                  <td class="border border-[#c4c4c4] pl-[20px] text-[#0000ff]">截面形状</td>
                  <td class="border border-[#c4c4c4] pl-[2px]">异形</td>
                  <td class="border border-[#c4c4c4]"></td>
                </tr>
                <tr class="h-[19px]">
                  <td class="border border-[#c4c4c4] bg-[#f0f0f0] text-center font-['Liberation_Sans'] text-[11px]">4</td>
                  <td class="border border-[#c4c4c4] pl-[20px] text-[#808080]">截面宽度<span class="font-['DejaVu_Sans_Mono'] text-[10px]">(mm)</span></td>
                  <td class="border border-[#c4c4c4] pl-[2px] text-[#808080] font-['Liberation_Sans'] text-[11px]">850</td>
                  <td class="border border-[#c4c4c4]"><div class="mx-auto w-[13px] h-[13px] border border-[#333]"></div></td>
                </tr>
                <tr class="h-[19px]">
                  <td class="border border-[#c4c4c4] bg-[#f0f0f0] text-center font-['Liberation_Sans'] text-[11px]">5</td>
                  <td class="border border-[#c4c4c4] pl-[20px] text-[#808080]">截面高度<span class="font-['DejaVu_Sans_Mono'] text-[10px]">(mm)</span></td>
                  <td class="border border-[#c4c4c4] pl-[2px] text-[#808080] font-['Liberation_Sans'] text-[11px]">300</td>
                  <td class="border border-[#c4c4c4]"><div class="mx-auto w-[13px] h-[13px] border border-[#333]"></div></td>
                </tr>
                <tr class="h-[19px]">
                  <td class="border border-[#c4c4c4] bg-[#f0f0f0] text-center font-['Liberation_Sans'] text-[11px]">6</td>
                  <td class="border border-[#c4c4c4] pl-[20px]">轴线距左边线距离<span class="font-['DejaVu_Sans_Mono'] text-[10px]">(mm)</span></td>
                  <td class="border border-[#c4c4c4] pl-[2px] font-['DejaVu_Sans_Mono'] text-[10px]">(425)</td>
                  <td class="border border-[#c4c4c4]"><div class="mx-auto w-[13px] h-[13px] border border-[#333]"></div></td>
                </tr>
                <tr class="h-[19px]">
                  <td class="border border-[#c4c4c4] bg-[#f0f0f0] text-center font-['Liberation_Sans'] text-[11px]">7</td>
                  <td class="border border-[#c4c4c4] pl-[20px] text-[#0000ff]">纵筋</td>
                  <td class="border border-[#c4c4c4]"></td>
                  <td class="border border-[#c4c4c4]"><div class="mx-auto w-[13px] h-[13px] border border-[#333]"></div></td>
                </tr>
                <tr class="h-[19px]">
                  <td class="border border-[#c4c4c4] bg-[#f0f0f0] text-center font-['Liberation_Sans'] text-[11px]">8</td>
                  <td class="border border-[#c4c4c4] pl-[20px] text-[#0000ff]">其它钢筋</td>
                  <td class="border border-[#c4c4c4]"></td>
                  <td class="border border-[#c4c4c4]"></td>
                </tr>
                <tr class="h-[19px]">
                  <td class="border border-[#c4c4c4] bg-[#fdd08a] text-[#7a0a6e] text-center font-['Liberation_Sans'] text-[11px]">9</td>
                  <td class="border border-[#c4c4c4] pl-[20px] bg-[#0078d7] text-white">备注</td>
                  <td class="border border-[#c4c4c4] bg-[#d6e8f7]"></td>
                  <td class="border border-[#c4c4c4]"></td>
                </tr>
                <tr class="h-[19px]">
                  <td class="border border-[#c4c4c4] bg-[#f0f0f0] text-center font-['Liberation_Sans'] text-[11px]">10</td>
                  <td class="border border-[#c4c4c4] text-[#808080]"><div class="flex items-center pl-[3px]"><span class="w-[12px] h-[12px] border border-[#b0b0b0] text-black flex items-center justify-center text-[11px] font-['Liberation_Mono']">+</span><span class="ml-[5px]">其它属性</span></div></td>
                  <td class="border border-[#c4c4c4]"></td>
                  <td class="border border-[#c4c4c4]"></td>
                </tr>
                <tr class="h-[19px]">
                  <td class="border border-[#c4c4c4] bg-[#f0f0f0] text-center font-['Liberation_Sans'] text-[11px]">18</td>
                  <td class="border border-[#c4c4c4] text-[#808080]"><div class="flex items-center pl-[3px]"><span class="w-[12px] h-[12px] border border-[#b0b0b0] text-black flex items-center justify-center text-[11px] font-['Liberation_Mono']">+</span><span class="ml-[5px]">锚固搭接</span></div></td>
                  <td class="border border-[#c4c4c4]"></td>
                  <td class="border border-[#c4c4c4]"></td>
                </tr>
                <tr class="h-[19px]">
                  <td class="border border-[#c4c4c4] bg-[#f0f0f0] text-center font-['Liberation_Sans'] text-[11px]">27</td>
                  <td class="border border-[#c4c4c4] text-[#808080]"><div class="flex items-center pl-[3px]"><span class="w-[12px] h-[12px] border border-[#b0b0b0] text-black flex items-center justify-center text-[11px] font-['Liberation_Mono']">+</span><span class="ml-[5px]">显示样式</span></div></td>
                  <td class="border border-[#c4c4c4]"></td>
                  <td class="border border-[#c4c4c4]"></td>
                </tr>
              </table>
            </div>
          </div>
        </section>
      </div>
    </div>
  </div>

  <!-- Status bar -->
  <footer class="h-[20px] shrink-0 flex">
    <div class="w-[147px] border-t-2 border-[#a8a8a8]"></div>
    <div class="ml-[3px] w-[77px] border-t-2 border-l-2 border-[#a8a8a8] flex items-center pl-px pb-[2px]">层高<span class="font-['DejaVu_Sans_Mono'] text-[10px]">:3.9m</span></div>
    <div class="ml-[3px] w-[97px] border-t-2 border-l-2 border-[#a8a8a8] flex items-center pl-px pb-[2px]">底标高<span class="font-['DejaVu_Sans_Mono'] text-[10px]">:-0.1m</span></div>
    <div class="ml-[3px] w-[47px] border-t-2 border-l-2 border-[#a8a8a8] flex items-center pl-px pb-[2px] font-['DejaVu_Sans_Mono'] text-[10px]">0</div>
    <div class="ml-[3px] w-[1467px] border-t-2 border-l-2 border-[#a8a8a8]"></div>
    <div class="ml-[3px] flex-1 border-t-2 border-l-2 border-[#a8a8a8] flex items-center pl-px pb-[2px] font-['DejaVu_Sans_Mono'] text-[10px]">795.7 FPS</div>
  </footer>

  <!-- Desktop taskbar strip -->
  <div class="h-2 flex-1 bg-[#1c1e1f] relative overflow-hidden">
    <div class="absolute left-[886px] top-0 w-[48px] h-2 bg-[#4a4a4a]"></div>
    <span class="absolute left-[1802px] top-[5px] text-white whitespace-nowrap">10:10 周</span>
    <div class="absolute left-[1915px] top-0 w-px h-2 bg-[#555]"></div>
  </div>

  <!-- Floating level meter -->
  <div class="absolute left-[1909px] top-[368px] w-2 h-[58px] rounded-[3px] overflow-hidden flex flex-col">
    <div class="h-[35px] bg-[#9a9a9a]"></div>
    <div class="flex-1 bg-gradient-to-b from-[#2fbf68] to-[#6cf09a]"></div>
  </div>
</body>
</html>
